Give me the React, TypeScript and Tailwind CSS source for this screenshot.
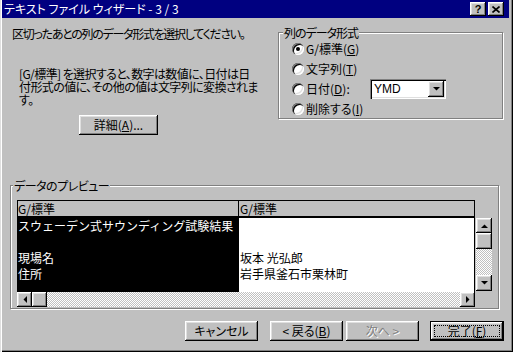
import React from 'react';

const raised =
  'bg-[#c0c0c0] shadow-[inset_-1px_-1px_#000,inset_1px_1px_#fff,inset_-2px_-2px_#808080,inset_2px_2px_#dfdfdf]';
const sunken =
  'shadow-[inset_1px_1px_#808080,inset_2px_2px_#000,inset_-1px_-1px_#fff,inset_-2px_-2px_#dfdfdf]';
const dither = 'bg-[repeating-conic-gradient(#fff_0_25%,#c0c0c0_0_50%)] bg-[length:2px_2px]';

function Arrow({ dir }: { dir: 'up' | 'down' | 'left' | 'right' }) {
  const pts = {
    up: '0,4 7,4 3.5,0.5',
    down: '0,0 7,0 3.5,3.5',
    left: '4,0 4,7 0.5,3.5',
    right: '0,0 0,7 3.5,3.5',
  }[dir];
  const vertical = dir === 'up' || dir === 'down';
  return (
    <svg width={vertical ? 7 : 4} height={vertical ? 4 : 7} viewBox={vertical ? '0 0 7 4' : '0 0 4 7'}>
      <polygon points={pts} fill="#000" />
    </svg>
  );
}

function Radio({ checked }: { checked?: boolean }) {
  return (
    <span className="w-[12px] h-[12px] rounded-full bg-white shrink-0 flex items-center justify-center shadow-[inset_1px_1px_#808080,inset_2px_2px_#000,inset_-1px_-1px_#fff,inset_-2px_-2px_#dfdfdf]">
      {checked && <span className="w-[4px] h-[4px] rounded-full bg-black" />}
    </span>
  );
}

function GroupBox({
  label,
  className,
  labelClass,
  children,
}: {
  label: string;
  className: string;
  labelClass: string;
  children?: React.ReactNode;
}) {
  return (
    <div className={`relative border border-[#808080] shadow-[inset_1px_1px_#fff,1px_1px_#fff] ${className}`}>
      <span className={`absolute top-[-7px] bg-[#c0c0c0] px-[1px] leading-[13px] ${labelClass}`}>{label}</span>
      {children}
    </div>
  );
}

function WinButton({
  children,
  className = '',
}: {
  children: React.ReactNode;
  className?: string;
}) {
  return (
    <button type="button" className={`${raised} h-[20px] flex items-center justify-center ${className}`}>
      {children}
    </button>
  );
}

export default function App() {
  return (
    <div className="w-[513px] h-[352px] bg-[#c0c0c0] overflow-hidden text-[12px] text-black font-['Noto_Sans_CJK_JP',sans-serif] [font-feature-settings:'palt'] shadow-[inset_1px_0_#dfdfdf,inset_2px_0_#fff,inset_-1px_-1px_#000,inset_-2px_-2px_#808080]">
      {/* Title bar */}
      <div className="ml-[2px] mr-[4px] h-[18px] bg-[#000080] flex items-center justify-between">
        <span className="pl-[2px] text-white leading-[18px]">テキスト ファイル ウィザード - 3 / 3</span>
        <div className="flex gap-[2px] mr-[5px]">
          <span className={`${raised} w-[16px] h-[14px] flex items-center justify-center font-['Liberation_Sans',sans-serif] font-bold text-[11px] leading-none`}>
            ?
          </span>
          <span className={`${raised} w-[16px] h-[14px] flex items-center justify-center`}>
            <svg width="8" height="7" viewBox="0 0 8 7">
              <path d="M0.5 0.5 L7.5 6.5 M7.5 0.5 L0.5 6.5" stroke="#000" strokeWidth="1.6" />
            </svg>
          </span>
        </div>
      </div>

      {/* Top section */}
      <div className="flex h-[167px]">
        <div className="w-[278px] pl-[12px] pt-[9px]">
          <p className="leading-[13px] whitespace-nowrap tracking-[-1.3px]">区切ったあとの列のデータ形式を選択してください。</p>
          <p className="mt-[27px] pl-[7px] leading-[13px] whitespace-nowrap tracking-[-0.6px]">
            [G/標準] を選択すると、数字は数値に、日付は日
            <br />
            付形式の値に、その他の値は文字列に変換されま
            <br />
            す。
          </p>
          <WinButton className="mt-[9px] ml-[67px] w-[79px]">
            詳細(<span className="underline">A</span>)...
          </WinButton>
        </div>

        <div className="pt-[14px]">
          <GroupBox
            label="列のデータ形式"
            className="w-[225px] h-[87px] pt-[6px] pl-[13px]"
            labelClass="left-[4px] tracking-[-1px]"
          >
            <div className="flex flex-col">
              <div className="h-[20px] flex items-center gap-[2px]">
                <Radio checked />
                <span>
                  G/標準(<span className="underline">G</span>)
                </span>
              </div>
              <div className="h-[20px] flex items-center gap-[2px]">
                <Radio />
                <span>
                  文字列(<span className="underline">T</span>)
                </span>
              </div>
              <div className="h-[20px] flex items-center gap-[2px]">
                <Radio />
                <span className="w-[62px]">
                  日付(<span className="underline">D</span>):
                </span>
                <div className={`${sunken} bg-white w-[76px] h-[20px] flex items-center justify-between pl-[4px] pr-[2px]`}>
                  <span className="font-['Liberation_Sans',sans-serif] text-[12px]">YMD</span>
                  <span className={`${raised} w-[16px] h-[16px] flex items-center justify-center`}>
                    <Arrow dir="down" />
                  </span>
                </div>
              </div>
              <div className="h-[19px] flex items-center gap-[2px]">
                <Radio />
                <span>
                  削除する(<span className="underline">I</span>)
                </span>
              </div>
            </div>
          </GroupBox>
        </div>
      </div>

      {/* Preview */}
      <GroupBox
        label="データのプレビュー"
        className="ml-[10px] w-[489px] h-[124px] pt-[14px] pl-[6px]"
        labelClass="left-[2px] tracking-[-0.5px]"
      >
        <div className="flex w-[475px] h-[107px] [font-feature-settings:normal]">
          <div className="flex flex-col w-[458px]">
            <div className="h-[92px] border-l border-t border-black flex flex-col">
              <div className="h-[17px] border-b-2 border-black flex leading-[15px]">
                <div className="w-[221px] border-r border-black">G/標準</div>
                <div className="flex-1 border-r border-black pl-[1px]">G/標準</div>
              </div>
              <div className="flex-1 flex leading-[16px]">
                <div className="w-[221px] border-r border-black bg-black text-white flex flex-col whitespace-nowrap">
                  <div className="h-[16px]">スウェーデン式サウンディング試験結果</div>
                  <div className="h-[16px]" />
                  <div className="h-[16px]">現場名</div>
                  <div className="h-[16px]">住所</div>
                </div>
                <div className="flex-1 border-r border-black bg-white flex flex-col pl-[1px]">
                  <div className="h-[16px]" />
                  <div className="h-[16px]" />
                  <div className="h-[16px]">坂本 光弘郎</div>
                  <div className="h-[16px]">岩手県釜石市栗林町</div>
                </div>
              </div>
            </div>
            <div className={`h-[15px] flex ${dither}`}>
              <span className={`${raised} w-[15px] h-[15px] flex items-center justify-center`}>
                <Arrow dir="left" />
              </span>
              <span className={`${raised} w-[15px] h-[15px]`} />
              <span className="flex-1" />
              <span className={`${raised} w-[15px] h-[15px] flex items-center justify-center`}>
                <Arrow dir="right" />
              </span>
            </div>
          </div>
          <div className="flex flex-col ml-[1px] w-[16px]">
            <div className="h-[18px]" />
            <div className={`h-[73px] flex flex-col ${dither}`}>
              <span className={`${raised} h-[15px] flex items-center justify-center`}>
                <Arrow dir="up" />
              </span>
              <span className={`${raised} h-[16px]`} />
              <span className="flex-1" />
              <span className={`${raised} h-[16px] flex items-center justify-center`}>
                <Arrow dir="down" />
              </span>
            </div>
          </div>
        </div>
      </GroupBox>

      {/* Buttons */}
      <div className="flex mt-[12px] pl-[185px]">
        <WinButton className="w-[73px]">キャンセル</WinButton>
        <WinButton className="w-[73px] ml-[12px]">
          &lt; 戻る(<span className="underline">B</span>)
        </WinButton>
        <WinButton className="w-[73px] ml-[3px] text-[#808080] [text-shadow:1px_1px_#fff]">次へ &gt;</WinButton>
        <button
          type="button"
          className="ml-[11px] w-[74px] h-[20px] p-[4px] flex bg-[#c0c0c0] shadow-[inset_0_0_0_1px_#000,inset_-2px_-2px_#000,inset_2px_2px_#fff,inset_-3px_-3px_#808080,inset_3px_3px_#dfdfdf]"
        >
          <span className="flex-1 border border-dotted border-black flex items-center justify-center leading-none">
            完了(<span className="underline">F</span>)
          </span>
        </button>
      </div>
    </div>
  );
}
